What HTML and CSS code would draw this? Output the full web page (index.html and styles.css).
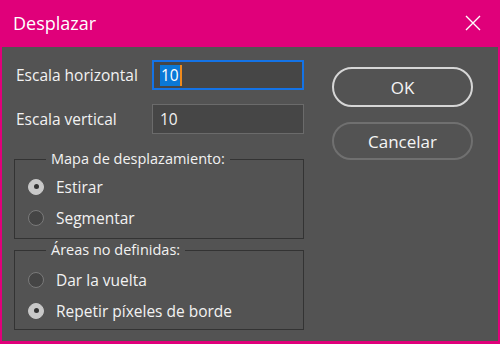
FILE: index.html
```html
<!DOCTYPE html>
<html lang="es">
<head>
<meta charset="utf-8">
<title>Desplazar</title>
<link rel="stylesheet" href="styles.css">
</head>
<body>
<div class="dialog">
  <div class="titlebar">
    <span class="title">Desplazar</span>
    <span class="close">
      <svg width="16" height="16" viewBox="0 0 16 16"><path d="M1 1 L15 15 M15 1 L1 15" stroke="#fff" stroke-width="1.4" fill="none"/></svg>
    </span>
  </div>
  <div class="content">
    <div class="left">
      <div class="row">
        <span class="label">Escala horizontal</span>
        <div class="input focused"><span class="sel">10</span><span class="caret"></span></div>
      </div>
      <div class="row">
        <span class="label">Escala vertical</span>
        <div class="input">10</div>
      </div>
      <fieldset class="group first">
        <legend>Mapa de desplazamiento:</legend>
        <div class="radio"><span class="dot checked"></span>Estirar</div>
        <div class="radio"><span class="dot"></span>Segmentar</div>
      </fieldset>
      <fieldset class="group second">
        <legend>Áreas no definidas:</legend>
        <div class="radio"><span class="dot"></span>Dar la vuelta</div>
        <div class="radio"><span class="dot checked"></span>Repetir píxeles de borde</div>
      </fieldset>
    </div>
    <div class="buttons">
      <div class="btn primary">OK</div>
      <div class="btn secondary">Cancelar</div>
    </div>
  </div>
</div>
</body>
</html>
```
FILE: styles.css
```css
* { box-sizing: border-box; }
html, body { margin: 0; padding: 0; }
body {
  width: 500px;
  height: 344px;
  overflow: hidden;
  font-family: "Open Sans", "Noto Sans", sans-serif;
  color: #f2f2f2;
}
.dialog {
  width: 500px;
  height: 344px;
  background: #535353;
  border: 2px solid #e0007a;
  border-top: 0;
  border-bottom-width: 3px;
}
.titlebar {
  height: 47px;
  background: #e0007a;
  margin: 0 -2px;
  display: flex;
  align-items: center;
  justify-content: space-between;
  padding: 0 19px 2px 13px;
}
.title {
  font-size: 18px;
  color: #fff;
}
.close { display: flex; }
.content {
  display: flex;
  padding: 13px 0 0 12px;
  gap: 28px;
}
.left {
  width: 290px;
  display: flex;
  flex-direction: column;
}
.row {
  display: flex;
  align-items: center;
  height: 30px;
  margin-bottom: 14px;
}
.label {
  width: 138px;
  padding-left: 2px;
  font-size: 15.5px;
}
.input {
  width: 152px;
  height: 30px;
  background: #464646;
  border: 1px solid #6b6b6b;
  display: flex;
  align-items: center;
  padding-left: 7px;
  font-size: 15.5px;
}
.input.focused {
  border: 2px solid #1473e6;
  padding-left: 6px;
}
.sel {
  background: #0a78d7;
  color: #fff;
  padding: 0 1px;
  line-height: 21px;
}
.caret {
  width: 2px;
  height: 21px;
  background: #f08a1c;
}
.group {
  margin: 0;
  padding: 0 0 0 13px;
  border: 1px solid #333;
  min-width: 0;
  font-size: 15.5px;
}
.group.first { margin-top: 1px; padding-top: 2px; padding-bottom: 5px; }
.group.second { margin-top: 1px; padding-top: 4px; padding-bottom: 3px; }
.group legend {
  margin-left: 18px;
  padding: 0 5px;
  line-height: 20px;
  font-size: 14.5px;
}
.radio {
  display: flex;
  align-items: center;
  height: 31px;
}
.dot {
  width: 16px;
  height: 16px;
  border-radius: 50%;
  border: 1.5px solid #7a7a7a;
  background: #454545;
  margin-right: 12px;
  flex: none;
  position: relative;
}
.dot.checked {
  background: #c8c8c8;
  border-color: #c8c8c8;
}
.dot.checked::after {
  content: "";
  position: absolute;
  left: 50%;
  top: 50%;
  width: 5px;
  height: 5px;
  margin: -2.5px 0 0 -2.5px;
  border-radius: 50%;
  background: #333;
}
.buttons {
  display: flex;
  flex-direction: column;
  gap: 15px;
  padding-top: 7px;
  width: 141px;
}
.btn {
  height: 40px;
  border-radius: 20px;
  border: 2px solid #707070;
  display: flex;
  align-items: center;
  justify-content: center;
  font-size: 17px;
  color: #f5f5f5;
}
.btn.secondary { height: 38px; }
.btn.primary {
  border-color: #d6d6d6;
}
```
